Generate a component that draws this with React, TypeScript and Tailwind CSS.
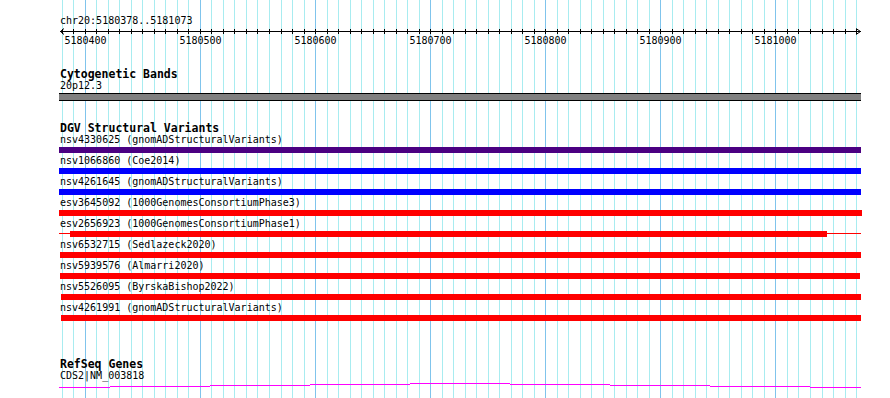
import React from "react";

const START = 5180378;
const END = 5181073;
const X = (bp: number) => 60 + ((bp - START) * 800) / (END - START);

const ticks: number[] = [];
for (let bp = 5180380; bp <= 5181070; bp += 10) ticks.push(bp);
const majors = ticks.filter((bp) => bp % 100 === 0);

type Variant = {
  label: string;
  color: string;
  from: number;
  to: number;
  thick?: [number, number];
};

const variants: Variant[] = [
  { label: "nsv4330625 (gnomADStructuralVariants)", color: "bg-[#4b0082]", from: 59, to: 861 },
  { label: "nsv1066860 (Coe2014)", color: "bg-[#0000ff]", from: 59, to: 861 },
  { label: "nsv4261645 (gnomADStructuralVariants)", color: "bg-[#0000ff]", from: 59, to: 861 },
  { label: "esv3645092 (1000GenomesConsortiumPhase3)", color: "bg-[#ff0000]", from: 59, to: 862 },
  { label: "esv2656923 (1000GenomesConsortiumPhase1)", color: "bg-[#ff0000]", from: 59, to: 861, thick: [70, 827] },
  { label: "nsv6532715 (Sedlazeck2020)", color: "bg-[#ff0000]", from: 60, to: 861 },
  { label: "nsv5939576 (Almarri2020)", color: "bg-[#ff0000]", from: 60, to: 860 },
  { label: "nsv5526095 (ByrskaBishop2022)", color: "bg-[#ff0000]", from: 61, to: 861 },
  { label: "nsv4261991 (gnomADStructuralVariants)", color: "bg-[#ff0000]", from: 61, to: 861 },
];

// gene line steps: [x1, x2, y]
const geneSteps: [number, number, number][] = [
  [59, 110, 6],
  [110, 210, 5],
  [210, 310, 4],
  [310, 410, 3],
  [410, 510, 2],
  [510, 610, 3],
  [610, 710, 4],
  [710, 810, 5],
  [810, 861, 6],
];

function Grid() {
  return (
    <svg className="absolute inset-0" width={890} height={398} shapeRendering="crispEdges">
      {ticks.map((bp) => {
        const x = Math.floor(X(bp)) + 0.5;
        return (
          <line
            key={bp}
            x1={x}
            x2={x}
            y1={0}
            y2={398}
            stroke={bp % 100 === 0 ? "#80c4ec" : "#a8ecf0"}
            strokeWidth={1}
          />
        );
      })}
    </svg>
  );
}

function Ruler() {
  return (
    <svg width={890} height={22} className="block" shapeRendering="crispEdges">
      <line x1={60} x2={861} y1={5.5} y2={5.5} stroke="#000" />
      {ticks.map((bp) => {
        const x = Math.floor(X(bp)) + 0.5;
        return <line key={bp} x1={x} x2={x} y1={3} y2={8} stroke="#000" />;
      })}
      <polyline points="64,2.5 60.5,5.5 64,8.5" fill="none" stroke="#000" shapeRendering="auto" />
      <polyline points="856,2.5 860.5,5.5 856,8.5" fill="none" stroke="#000" shapeRendering="auto" />
      {majors.map((bp) => (
        <text
          key={bp}
          x={Math.floor(X(bp)) + 0.5}
          y={18}
          textAnchor="middle"
          fontFamily="'DejaVu Sans Mono', monospace"
          fontSize={10}
          fill="#000"
        >
          {bp}
        </text>
      ))}
    </svg>
  );
}

function VariantRow({ v }: { v: Variant }) {
  return (
    <div>
      <div className="h-[13px] pl-[60px] text-[10px] leading-[11px]">{v.label}</div>
      {v.thick ? (
        <div className="relative h-[6px]" style={{ marginLeft: v.from, width: v.to - v.from }}>
          <div className={`absolute left-0 right-0 top-[2px] h-px ${v.color}`} />
          <div
            className={`absolute top-0 h-[6px] ${v.color}`}
            style={{ left: v.thick[0] - v.from, width: v.thick[1] - v.thick[0] }}
          />
        </div>
      ) : (
        <div className={`h-[6px] ${v.color}`} style={{ marginLeft: v.from, width: v.to - v.from }} />
      )}
      <div className="h-[2px]" />
    </div>
  );
}

export default function App() {
  return (
    <div className="relative h-[398px] w-[890px] overflow-hidden bg-white text-black font-['DejaVu_Sans_Mono',monospace]">
      <Grid />
      <div className="relative">
        <div className="h-[11px] mt-[15px] pl-[60px] text-[10px] leading-[11px]">chr20:5180378..5181073</div>
        <Ruler />

        {/* Cytogenetic bands */}
        <div className="mt-[20px] h-[12px] pl-[60px] text-[11.5px] font-bold leading-[12px]">Cytogenetic Bands</div>
        <div className="h-[11px] pl-[60px] text-[10px] leading-[11px]">20p12.3</div>
        <div className="mt-[2px] ml-[59px] h-[8px] w-[802px] border-y border-black bg-[#808080]" />

        {/* DGV */}
        <div className="mt-[21px] h-[12px] pl-[60px] text-[11.5px] font-bold leading-[12px]">DGV Structural Variants</div>
        {variants.map((v) => (
          <VariantRow key={v.label} v={v} />
        ))}

        {/* RefSeq */}
        <div className="mt-[35px] h-[12px] pl-[60px] text-[11.5px] font-bold leading-[12px]">RefSeq Genes</div>
        <div className="h-[11px] pl-[60px] text-[10px] leading-[11px]">CDS2|NM_003818</div>
        <svg width={890} height={8} className="block" shapeRendering="crispEdges">
          {geneSteps.map(([x1, x2, y]) => (
            <line key={x1} x1={x1} x2={x2} y1={y + 0.5} y2={y + 0.5} stroke="#ff00ff" />
          ))}
        </svg>
      </div>
    </div>
  );
}
